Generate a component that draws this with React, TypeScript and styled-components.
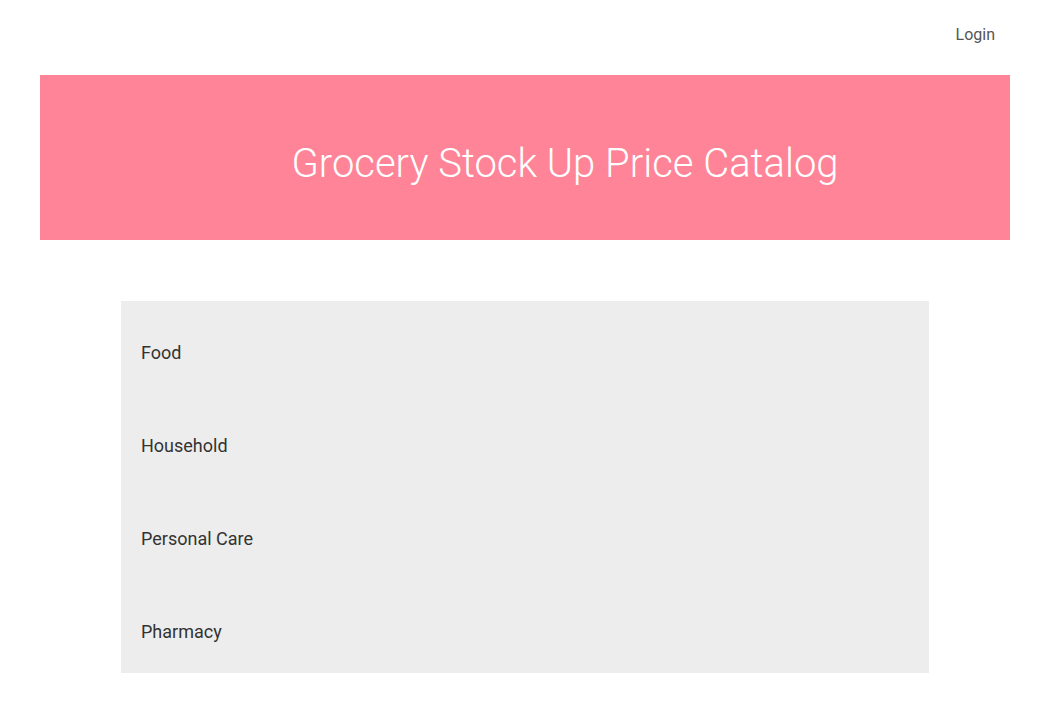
import React from "react";
import styled, { createGlobalStyle } from "styled-components";

const Global = createGlobalStyle`
  html, body { margin: 0; padding: 0; background: #ffffff; }
  body { font-family: Roboto, "Noto Sans", Arial, sans-serif; }
  * { box-sizing: border-box; }
`;

const Page = styled.div`
  width: 1038px;
  display: flex;
  flex-direction: column;
  padding: 0 28px 0 40px;
`;

const TopBar = styled.nav`
  height: 75px;
  display: flex;
  justify-content: flex-end;
  align-items: flex-start;
  padding: 25px 15px 0 0;
`;

const NavLink = styled.a`
  font-size: 16px;
  line-height: 19px;
  color: #555555;
  text-decoration: none;
  cursor: pointer;
`;

const Banner = styled.header`
  height: 165px;
  background: #ff8497;
  display: flex;
  align-items: center;
  justify-content: center;
  padding-left: 80px;
`;

const Title = styled.h1`
  margin: 12px 0 0 0;
  font-weight: 300;
  font-size: 40px;
  line-height: 1;
  color: #ffffff;
`;

const CategoryPanel = styled.ul`
  list-style: none;
  margin: 61px 0 0 81px;
  padding: 0;
  width: 808px;
  background: #ededed;
  display: flex;
  flex-direction: column;
`;

const CategoryItem = styled.li`
  height: 93px;
  padding: 42px 20px 0 20px;
  font-size: 18px;
  line-height: 20px;
  color: #333333;
`;

const categories = ["Food", "Household", "Personal Care", "Pharmacy"];

export default function App() {
  return (
    <>
      <Global />
      <Page>
        <TopBar>
          <NavLink>Login</NavLink>
        </TopBar>
        <Banner>
          <Title>Grocery Stock Up Price Catalog</Title>
        </Banner>
        <CategoryPanel>
          {categories.map((c) => (
            <CategoryItem key={c}>{c}</CategoryItem>
          ))}
        </CategoryPanel>
      </Page>
    </>
  );
}
